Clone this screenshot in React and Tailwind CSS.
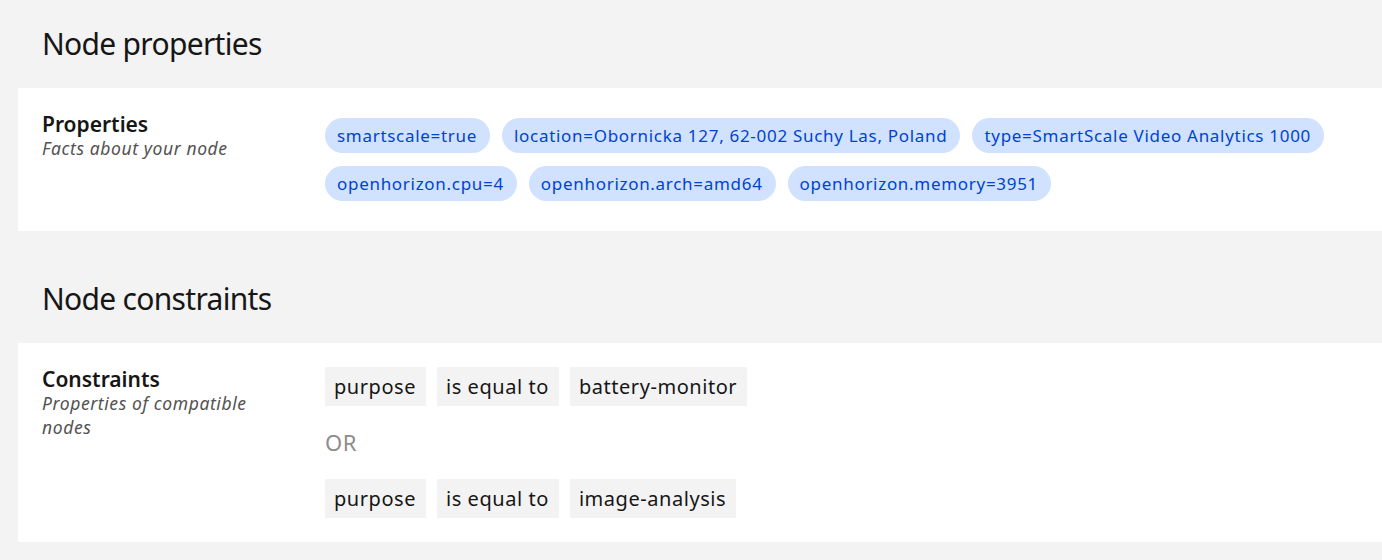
import React from 'react';

const properties = [
    'smartscale=true',
    'location=Obornicka 127, 62-002 Suchy Las, Poland',
    'type=SmartScale Video Analytics 1000',
    'openhorizon.cpu=4',
    'openhorizon.arch=amd64',
    'openhorizon.memory=3951',
];

const constraints = [
    ['purpose', 'is equal to', 'battery-monitor'],
    ['purpose', 'is equal to', 'image-analysis'],
];

const font = { fontFamily: '"Noto Sans", "Open Sans", sans-serif' };

const Section = ({ title, label, description, children, bodyClass }) => (
    <section>
        <h2 className="pl-[42px] pt-6 pb-6 text-[30px] leading-[40px] tracking-[-0.7px] font-normal text-[#161616]">{title}</h2>
        <div className={`ml-[18px] bg-white flex ${bodyClass}`}>
            <div className="w-[307px] shrink-0 pl-6 pr-[44px] pt-6">
                <h3 className="text-[21px] leading-[24px] font-semibold text-[#161616]">{label}</h3>
                <p className="text-[17.5px] leading-[24px] tracking-[0.6px] italic text-[#525252]">{description}</p>
            </div>
            <div className="flex-1">{children}</div>
        </div>
    </section>
);

export default function App() {
    return (
        <div className="min-h-[560px] bg-[#f3f3f3] overflow-hidden" style={font}>
            <Section
                title="Node properties"
                label="Properties"
                description="Facts about your node"
                bodyClass="pb-[30px]"
            >
                <div className="flex flex-wrap gap-x-3 gap-y-[13px] pt-[30px]">
                    {properties.map((p) => (
                        <span
                            key={p}
                            className="h-[35px] pl-3 pr-[13px] rounded-full bg-[#d0e2ff] text-[#0043ce] text-[17px] tracking-[0.7px] flex items-center"
                        >
                            {p}
                        </span>
                    ))}
                </div>
            </Section>
            <div className="h-6" />
            <Section
                title="Node constraints"
                label="Constraints"
                description="Properties of compatible nodes"
                bodyClass="pb-6"
            >
                <div className="flex flex-col pt-6">
                    {constraints.map((row, i) => (
                        <React.Fragment key={i}>
                            {i > 0 && (
                                <div className="h-[73px] flex items-center text-[22px] tracking-[0.5px] text-[#8d8d8d]">OR</div>
                            )}
                            <div className="flex gap-[11px]">
                                {row.map((c, j) => (
                                    <span
                                        key={j}
                                        className="h-[39px] pl-[9px] pr-[10px] bg-[#f3f3f3] text-[#161616] text-[20px] tracking-[0.55px] flex items-center"
                                    >
                                        {c}
                                    </span>
                                ))}
                            </div>
                        </React.Fragment>
                    ))}
                </div>
            </Section>
        </div>
    );
}
